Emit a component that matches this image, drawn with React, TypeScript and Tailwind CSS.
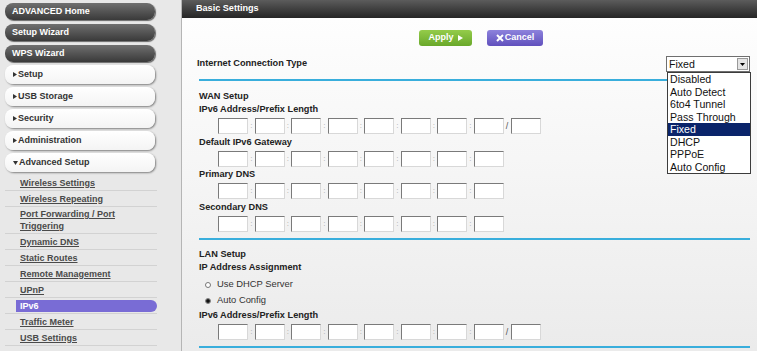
import React from "react";

const font = "font-['Liberation_Sans',Arial,sans-serif]";

function DarkButton({ label }: { label: string }) {
  return (
    <div className="h-[17px] w-[150px] rounded-[8px] bg-linear-to-b from-[#707070] to-[#3a3a3a] shadow-[1px_1px_1px_rgba(0,0,0,0.55)] flex items-center pl-[7px] text-[9px] font-bold text-white">
      {label}
    </div>
  );
}

function LightButton({ label, open }: { label: string; open?: boolean }) {
  return (
    <div className="h-[19px] w-[150px] rounded-[8px] bg-linear-to-b from-white to-[#f4f4f4] shadow-[1px_1px_2px_rgba(0,0,0,0.45)] flex items-center pl-[8px] text-[9px] font-bold text-[#333]">
      {open ? (
        <svg width="5" height="4" viewBox="0 0 5 4" className="mr-[1px]">
          <path d="M0 0H5L2.5 4Z" fill="#333" />
        </svg>
      ) : (
        <svg width="4" height="5" viewBox="0 0 4 5" className="mr-[1px]">
          <path d="M0 0V5L4 2.5Z" fill="#333" />
        </svg>
      )}
      {label}
    </div>
  );
}

const subItems: { label: React.ReactNode; active?: boolean; tall?: boolean }[] = [
  { label: "Wireless Settings" },
  { label: "Wireless Repeating" },
  { label: <>Port Forwarding / Port<br />Triggering</>, tall: true },
  { label: "Dynamic DNS" },
  { label: "Static Routes" },
  { label: "Remote Management" },
  { label: "UPnP" },
  { label: "IPv6", active: true },
  { label: "Traffic Meter" },
  { label: "USB Settings" },
];

function Sidebar() {
  return (
    <div className="w-[182px] shrink-0 h-full bg-[#e8e8e8] border-r border-[#b5b5b5] pt-[3px] pl-[5px]">
      <div className="flex flex-col gap-[4px]">
        <DarkButton label="ADVANCED Home" />
        <DarkButton label="Setup Wizard" />
        <DarkButton label="WPS Wizard" />
      </div>
      <div className="flex flex-col gap-[3px] mt-[3px]">
        <LightButton label="Setup" />
        <LightButton label="USB Storage" />
        <LightButton label="Security" />
        <LightButton label="Administration" />
        <LightButton label="Advanced Setup" open />
      </div>
      <div className="mt-[3px] w-[152px]">
        {subItems.map((it, i) => (
          <div
            key={i}
            className={`border-b border-[#d2d2d2] text-[9px] font-bold leading-[12px] ${it.tall ? "py-[1px]" : "py-[1.5px]"}`}
          >
            {it.active ? (
              <div className="ml-[11px] pl-[4px] bg-[#796cd5] rounded-r-full text-white">{it.label}</div>
            ) : (
              <div className="pl-[15px] text-[#4a4a4a] underline">{it.label}</div>
            )}
          </div>
        ))}
      </div>
    </div>
  );
}

function IpRow({ groups, prefix }: { groups: number; prefix?: boolean }) {
  const cells = [];
  for (let i = 0; i < groups; i++) {
    if (i > 0)
      cells.push(
        <span key={"s" + i} className="w-[6.5px] text-center text-[8px] text-[#aaa] leading-[16px]">:</span>
      );
    cells.push(
      <div key={i} className="w-[30px] h-[16px] bg-white border border-t-[#7a7a7a] border-l-[#7a7a7a] border-r-[#d8d8d8] border-b-[#d8d8d8]" />
    );
  }
  if (prefix) {
    cells.push(
      <span key="p" className="w-[7px] text-center text-[9px] text-[#555] leading-[16px]">/</span>
    );
    cells.push(
      <div key="pf" className="w-[30px] h-[16px] bg-white border border-t-[#7a7a7a] border-l-[#7a7a7a] border-r-[#d8d8d8] border-b-[#d8d8d8]" />
    );
  }
  return <div className="flex ml-[21px] mt-[2px] h-[16px]">{cells}</div>;
}

function Label({ children, className = "" }: { children: React.ReactNode; className?: string }) {
  return <div className={`pl-[2px] text-[9.2px] font-bold leading-[13px] text-[#222] ${className}`}>{children}</div>;
}

function BlueLine({ className = "" }: { className?: string }) {
  return <div className={`h-[2px] ml-[2px] bg-[#39aedc] ${className}`} />;
}

function Radio({ checked, label, className = "" }: { checked?: boolean; label: string; className?: string }) {
  return (
    <div className={`h-[16px] flex items-center ml-[8px] ${className}`}>
      <div className="w-[6px] h-[6px] rounded-full border border-[#777] bg-white flex items-center justify-center">
        {checked && <div className="w-[4px] h-[4px] rounded-full bg-[#111]" />}
      </div>
      <span className="ml-[6px] text-[9.4px] text-[#333]">{label}</span>
    </div>
  );
}

const options = ["Disabled", "Auto Detect", "6to4 Tunnel", "Pass Through", "Fixed", "DHCP", "PPPoE", "Auto Config"];

function Main() {
  return (
    <div className="flex-1 h-full flex flex-col bg-linear-to-b from-white to-[#ebebeb]">
      <div className="h-[18px] shrink-0 bg-linear-to-b from-[#5c5c5c] to-[#262626] flex items-center pl-[14px] text-[9.1px] font-bold text-white">
        Basic Settings
      </div>
      <div className="relative pl-[15px] pr-[7px]">
        <div className="mt-[12px] h-[16px] flex ml-[222px] gap-[15px]">
          <div className="w-[53px] h-[16px] rounded-[3px] bg-linear-to-b from-[#94cc4a] to-[#69a82a] flex items-center justify-center text-[9px] font-bold text-white gap-[4px]">
            Apply
            <svg width="5" height="6" viewBox="0 0 5 6">
              <path d="M0 0V6L5 3Z" fill="#fff" />
            </svg>
          </div>
          <div className="w-[56px] h-[16px] rounded-[3px] bg-linear-to-b from-[#8d82dc] to-[#6150bd] flex items-center justify-center text-[9px] font-bold text-white">
            <svg width="8" height="8" viewBox="0 0 8 8" className="mr-[1px]">
              <path d="M1 1L7 7M7 1L1 7" stroke="#fff" strokeWidth="2" />
            </svg>
            Cancel
          </div>
        </div>

        <div className="mt-[10px] h-[16px] flex items-center justify-between">
          <div className="text-[9.2px] font-bold text-[#222]">Internet Connection Type</div>
          <div className="w-[84px] h-[16px] bg-white border border-[#6f6f6f] flex items-center justify-between pl-[2px] pr-[1px]">
            <span className="text-[10.6px] text-[#111] leading-[14px]">Fixed</span>
            <div className="w-[11px] h-[12px] bg-[#e4e4e4] border border-[#999] flex items-center justify-center">
              <svg width="5" height="3" viewBox="0 0 5 3">
                <path d="M0 0H5L2.5 3Z" fill="#000" />
              </svg>
            </div>
          </div>
        </div>

        <BlueLine className="mt-[7px]" />

        <Label className="mt-[9px]">WAN Setup</Label>
        <Label>IPv6 Address/Prefix Length</Label>
        <IpRow groups={8} prefix />
        <Label className="mt-[1.5px]">Default IPv6 Gateway</Label>
        <IpRow groups={8} />
        <Label className="mt-[1.5px]">Primary DNS</Label>
        <IpRow groups={8} />
        <Label className="mt-[1.5px]">Secondary DNS</Label>
        <IpRow groups={8} />

        <BlueLine className="mt-[6.5px]" />

        <Label className="mt-[7.5px]">LAN Setup</Label>
        <Label>IP Address Assignment</Label>
        <Radio label="Use DHCP Server" className="mt-[3px]" />
        <Radio label="Auto Config" checked />
        <Label>IPv6 Address/Prefix Length</Label>
        <IpRow groups={8} prefix />

        <BlueLine className="mt-[6px]" />

        <div className="absolute left-[485px] top-[54px] w-[84px] bg-white border border-[#3c3c3c]">
          {options.map((o) => (
            <div
              key={o}
              className={`pl-[2px] text-[10.6px] leading-[12.5px] ${o === "Fixed" ? "bg-[#0a246a] text-white" : "text-[#111]"}`}
            >
              {o}
            </div>
          ))}
        </div>
      </div>
    </div>
  );
}

export default function App() {
  return (
    <div className={`w-[757px] h-[351px] overflow-hidden flex ${font}`}>
      <Sidebar />
      <Main />
    </div>
  );
}
